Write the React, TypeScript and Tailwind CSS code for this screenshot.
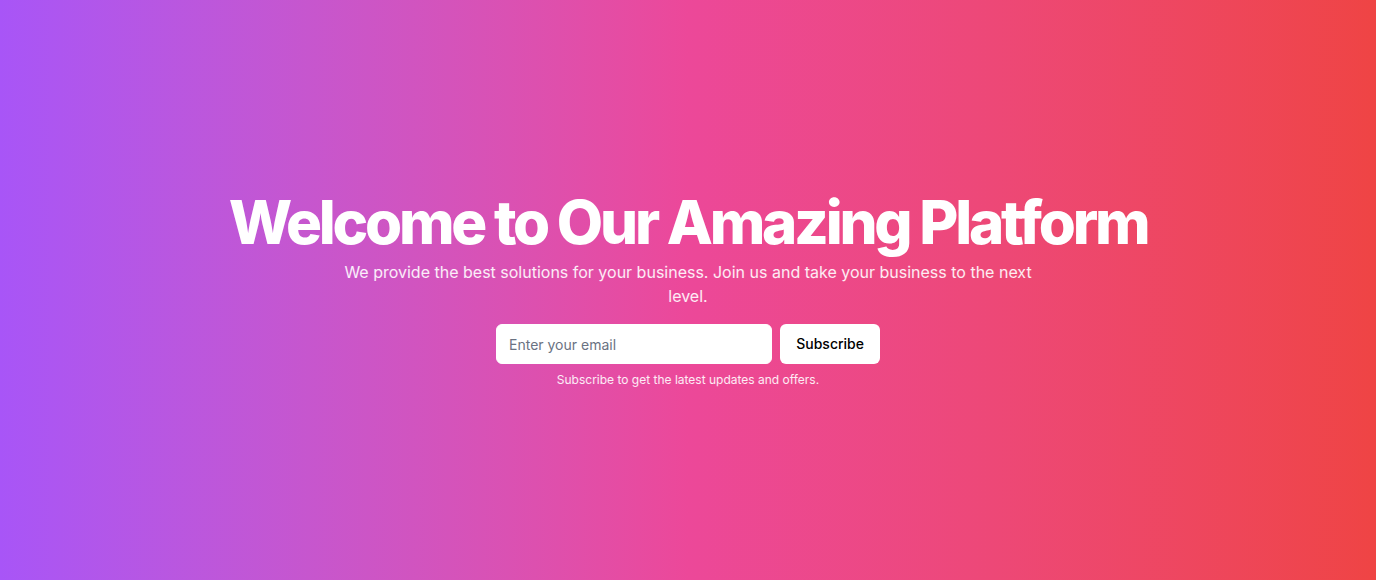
import React from "react";

export default function App() {
  return (
    <div
      className="flex min-h-[580px] w-full items-center justify-center bg-gradient-to-r from-[#a855f7] via-[#ec4899] to-[#ef4444] px-4"
      style={{ fontFamily: "Inter, 'Noto Sans', sans-serif" }}
    >
      <div className="flex flex-col items-center text-center">
        <h1 className="text-[60px] font-extrabold leading-[60px] tracking-[-0.054em] text-white">
          Welcome to Our Amazing Platform
        </h1>
        <p className="mt-2 max-w-[700px] text-base leading-6 text-white/90">
          We provide the best solutions for your business. Join us and take your business to the next level.
        </p>
        <form
          className="mt-4 flex w-full max-w-sm gap-2"
          onSubmit={(e) => e.preventDefault()}
        >
          <input
            type="email"
            placeholder="Enter your email"
            className="h-10 min-w-0 flex-1 rounded-md border border-white bg-white px-3 text-sm text-gray-900 placeholder:text-gray-500 focus:outline-none"
          />
          <button
            type="submit"
            className="h-10 rounded-md bg-white px-4 text-sm font-medium text-black"
          >
            Subscribe
          </button>
        </form>
        <p className="mt-2 text-xs leading-4 text-white/90">
          Subscribe to get the latest updates and offers.
        </p>
      </div>
    </div>
  );
}
